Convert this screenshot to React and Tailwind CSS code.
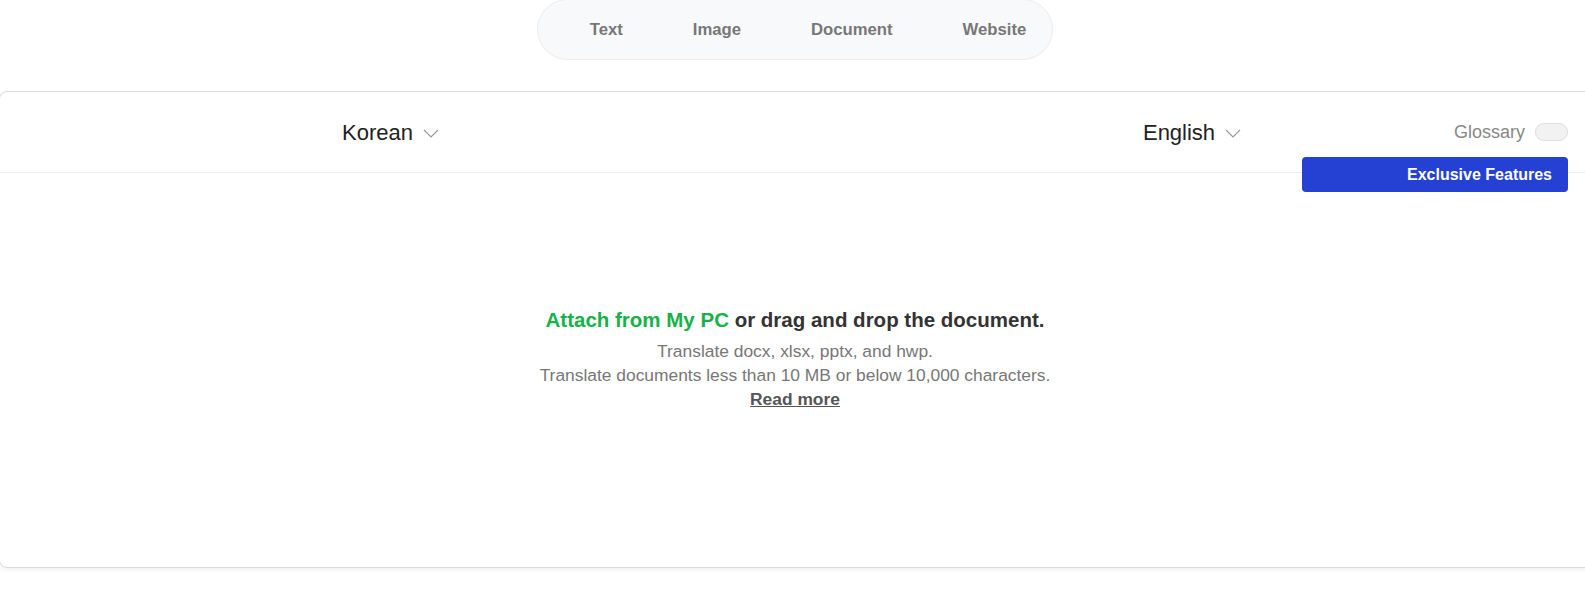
import React from "react";

const Chevron = () => (
  <svg width="16" height="9" viewBox="0 0 16 9" fill="none" className="ml-[10px] mt-[2px]">
    <polyline points="1,1 8,8 15,1" stroke="#999" strokeWidth="1.2" />
  </svg>
);

const App = () => {
  const tabs = ["Text", "Image", "Document", "Website"];

  return (
    <div className="w-[1585px] h-[605px] overflow-hidden bg-white font-['Liberation_Sans',Arial,sans-serif]">
      {/* tabs */}
      <div className="flex justify-center pl-[5px]">
        <div className="flex items-center h-[61px] -mt-px pl-[52px] pr-[26px] gap-[70px] rounded-full bg-[#f8f9fb] border border-[#ececec]">
          {tabs.map((t) => (
            <span key={t} className="text-[16.7px] font-bold text-[#777]">
              {t}
            </span>
          ))}
        </div>
      </div>

      {/* card */}
      <div className="mt-[31px] ml-[-1px] mr-[-10px] rounded-[8px] border border-[#dcdcdc] shadow-[0_2px_4px_rgba(0,0,0,0.06)] bg-white">
        <div className="relative flex items-center h-[81px] border-b border-[#eee] pr-[26px]">
          <div className="flex items-center ml-[342px]">
            <span className="text-[22px] text-[#222]">Korean</span>
            <Chevron />
          </div>
          <div className="flex items-center ml-[704px]">
            <span className="text-[22px] text-[#222]">English</span>
            <Chevron />
          </div>
          <div className="flex items-center ml-auto">
            <span className="text-[18px] text-[#888]">Glossary</span>
            <span className="ml-[10px] w-[33px] h-[18px] rounded-full bg-[#f2f2f2] border border-[#dedede]" />
          </div>

          {/* exclusive features */}
          <button className="absolute right-[26px] top-[65px] w-[266px] h-[35px] rounded-[4px] bg-[#2541d4] text-white text-[16px] font-bold text-right pr-[16px]">
            Exclusive Features
          </button>
        </div>

        <div className="h-[394px] pt-[133px] flex flex-col items-center pr-[4px]">
          <p className="text-[20.5px] leading-[28px] font-bold text-[#333]">
            <span className="text-[#17b14a]">Attach from My PC</span> or drag and drop the document.
          </p>
          <p className="mt-[6px] text-[17.4px] leading-[23px] text-[#777]">
            Translate docx, xlsx, pptx, and hwp.
          </p>
          <p className="text-[17.4px] leading-[24px] text-[#777]">
            Translate documents less than 10 MB or below 10,000 characters.
          </p>
          <a href="#" className="text-[17.4px] leading-[24px] font-bold text-[#555] underline">
            Read more
          </a>
        </div>
      </div>
    </div>
  );
};

export default App;
